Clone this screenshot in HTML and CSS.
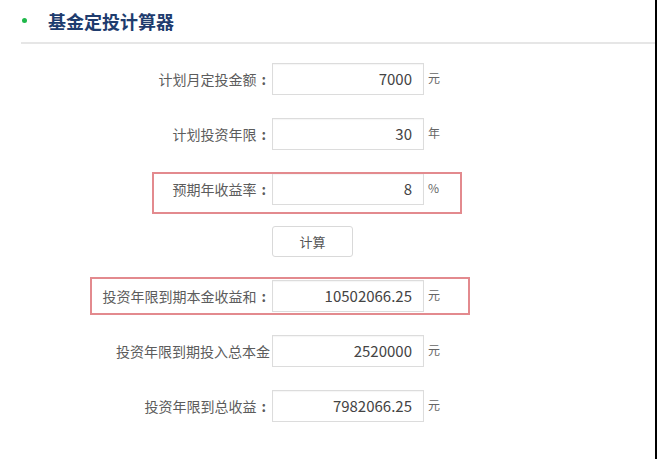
FILE: index.html
```html
<!DOCTYPE html>
<html lang="zh-CN">
<head>
<meta charset="utf-8">
<title>基金定投计算器</title>
<link rel="stylesheet" href="styles.css">
</head>
<body>
<div class="page">
  <div class="header">
    <span class="dot"></span>
    <h2 class="title">基金定投计算器</h2>
  </div>
  <div class="form">
    <div class="row">
      <label class="label">计划月定投金额<span class="colon">:</span></label>
      <div class="field">7000</div>
      <span class="unit">元</span>
    </div>
    <div class="row">
      <label class="label">计划投资年限<span class="colon">:</span></label>
      <div class="field">30</div>
      <span class="unit">年</span>
    </div>
    <div class="row">
      <span class="mark mark-rate"></span>
      <label class="label">预期年收益率<span class="colon">:</span></label>
      <div class="field">8</div>
      <span class="unit">%</span>
    </div>
    <div class="row row-btn">
      <span class="label"></span>
      <button class="btn">计算</button>
    </div>
    <div class="row">
      <span class="mark mark-sum"></span>
      <label class="label">投资年限到期本金收益和<span class="colon">:</span></label>
      <div class="field">10502066.25</div>
      <span class="unit">元</span>
    </div>
    <div class="row">
      <label class="label">投资年限到期投入总本金</label>
      <div class="field">2520000</div>
      <span class="unit">元</span>
    </div>
    <div class="row">
      <label class="label">投资年限到总收益<span class="colon">:</span></label>
      <div class="field">7982066.25</div>
      <span class="unit">元</span>
    </div>
  </div>
</div>
</body>
</html>
```

FILE: styles.css
```css
html, body {
  margin: 0;
  padding: 0;
  background: #ffffff;
}
body {
  font-family: "Noto Sans CJK SC", "Noto Sans", sans-serif;
  color: #555555;
}
.page {
  width: 655px;
  height: 459px;
  border-right: 2px solid #000000;
  box-sizing: content-box;
  overflow: hidden;
}
.header {
  margin-left: 21px;
  height: 42px;
  border-bottom: 2px solid #e6e6e6;
  display: flex;
  align-items: center;
}
.dot {
  width: 5px;
  height: 5px;
  border-radius: 50%;
  background: #1fb84a;
  margin-left: 1px;
  margin-top: -1px;
}
.title {
  margin: 0 0 0 21px;
  font-size: 18px;
  font-weight: bold;
  color: #1e3c6e;
  line-height: 24px;
}
.form {
  padding-top: 19px;
  display: flex;
  flex-direction: column;
  gap: 23px;
}
.row {
  position: relative;
  display: flex;
  align-items: center;
  height: 32px;
}
.row-btn {
  height: 31px;
  margin-top: -2px;
}
.label {
  width: 270px;
  text-align: right;
  font-size: 14px;
  color: #5c5c5c;
  white-space: nowrap;
  flex: none;
}
.colon {
  display: inline-block;
  margin-left: 5px;
  margin-right: 4px;
  font-weight: bold;
}
.field {
  margin-left: 2px;
  width: 150px;
  height: 30px;
  border: 1px solid #dcdcdc;
  box-shadow: inset 0 1px 1px rgba(0,0,0,0.04);
  text-align: right;
  box-sizing: content-box;
  font-size: 15px;
  line-height: 30px;
  color: #444444;
  flex: none;
}
.field::after {
  content: "";
  display: inline-block;
  width: 11px;
}
.unit {
  margin-left: 4px;
  margin-top: -3px;
  font-size: 12px;
  color: #666666;
}
.btn {
  margin-left: 2px;
  width: 81px;
  height: 31px;
  border: 1px solid #d9d9d9;
  border-radius: 3px;
  background: #ffffff;
  font-family: "Noto Sans CJK SC", "Noto Sans", sans-serif;
  font-size: 13px;
  color: #555555;
  padding: 0;
}
.mark {
  position: absolute;
  border: 2px solid #e38a8e;
  box-sizing: border-box;
  pointer-events: none;
}
.mark-rate {
  left: 152px;
  top: -1px;
  width: 310px;
  height: 42px;
}
.mark-sum {
  left: 90px;
  top: -3px;
  width: 380px;
  height: 38px;
}
```
